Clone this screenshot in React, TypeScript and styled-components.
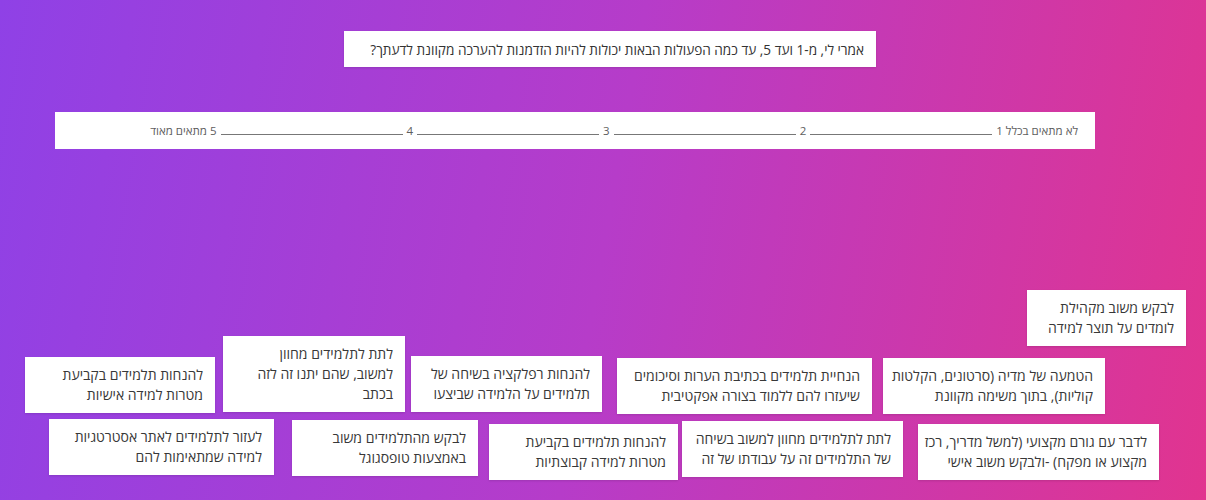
import styled, { createGlobalStyle } from 'styled-components';

const GlobalStyle = createGlobalStyle`
    html, body {
        margin: 0;
        padding: 0;
    }
    body {
        font-family: "Open Sans", "DejaVu Sans", sans-serif;
        direction: rtl;
    }
`;

const Page = styled.div`
    width: 1206px;
    height: 500px;
    display: flex;
    flex-direction: column;
    align-items: center;
    background: linear-gradient(100deg, #8f41e6 0%, #b63cc9 50%, #e1348f 100%);
    overflow: hidden;
`;

const Question = styled.div`
    margin-top: 31px;
    margin-left: 14px;
    width: 532px;
    box-sizing: border-box;
    padding: 0 12px;
    height: 36px;
    display: flex;
    align-items: center;
    background: #fff;
    color: #333;
    font-size: 13.6px;
    box-shadow: 0 1px 2px rgba(0, 0, 0, 0.12);
`;

const Scale = styled.div`
    margin-top: 45px;
    margin-right: 56px;
    width: 1040px;
    height: 37px;
    box-sizing: border-box;
    padding: 0 17px;
    display: flex;
    align-items: baseline;
    gap: 4px;
    background: #fff;
    color: #5e5e5e;
    font-size: 11.5px;
    line-height: 37px;
`;

const ScaleLine = styled.span<{ $w: number }>`
    display: inline-block;
    width: ${(p) => p.$w}px;
    height: 0;
    border-bottom: 1px solid #777;
    margin-bottom: -2px;
`;

const Board = styled.div`
    position: relative;
    flex: 1;
    align-self: stretch;
`;

const Card = styled.div<{ $x: number; $y: number; $w: number }>`
    position: absolute;
    left: ${(p) => p.$x}px;
    top: ${(p) => p.$y}px;
    width: ${(p) => p.$w}px;
    box-sizing: border-box;
    padding: 8px 12px;
    background: #fff;
    color: #383838;
    font-size: 14px;
    line-height: 20px;
    text-align: right;
    white-space: nowrap;
    box-shadow: 0 1px 2px rgba(0, 0, 0, 0.12);
`;

interface Item {
    x: number;
    y: number;
    w: number;
    lines: string[];
}

const TOP = 149;

const items: Item[] = [
    { x: 1027, y: 290, w: 159, lines: ['לבקש משוב מקהילת', 'לומדים על תוצר למידה'] },
    { x: 883, y: 358, w: 222, lines: ['הטמעה של מדיה (סרטונים, הקלטות', 'קוליות), בתוך משימה מקוונת'] },
    { x: 617, y: 358, w: 255, lines: ['הנחיית תלמידים בכתיבת הערות וסיכומים', 'שיעזרו להם ללמוד בצורה אפקטיבית'] },
    { x: 411, y: 356, w: 191, lines: ['להנחות רפלקציה בשיחה של', 'תלמידים על הלמידה שביצעו'] },
    { x: 223, y: 336, w: 182, lines: ['לתת לתלמידים מחוון', 'למשוב, שהם יתנו זה לזה', 'בכתב'] },
    { x: 25, y: 357, w: 190, lines: ['להנחות תלמידים בקביעת', 'מטרות למידה אישיות'] },
    { x: 49, y: 419, w: 225, lines: ['לעזור לתלמידים לאתר אסטרטגיות', 'למידה שמתאימות להם'] },
    { x: 292, y: 420, w: 186, lines: ['לבקש מהתלמידים משוב', 'באמצעות טופסגוגל'] },
    { x: 489, y: 424, w: 189, lines: ['להנחות תלמידים בקביעת', 'מטרות למידה קבוצתיות'] },
    { x: 682, y: 421, w: 221, lines: ['לתת לתלמידים מחוון למשוב בשיחה', 'של התלמידים זה על עבודתו של זה'] },
    { x: 918, y: 424, w: 241, lines: ['לדבר עם גורם מקצועי (למשל מדריך, רכז', 'מקצוע או מפקח) -ולבקש משוב אישי'] },
];

export default function App() {
    return (
        <>
            <GlobalStyle />
            <Page>
                <Question>אמרי לי, מ-1 ועד 5, עד כמה הפעולות הבאות יכולות להיות הזדמנות להערכה מקוונת לדעתך?</Question>
                <Scale>
                    <span>לא מתאים בכלל 1</span>
                    <ScaleLine $w={182} />
                    <span>2</span>
                    <ScaleLine $w={182} />
                    <span>3</span>
                    <ScaleLine $w={182} />
                    <span>4</span>
                    <ScaleLine $w={182} />
                    <span>5 מתאים מאוד</span>
                </Scale>
                <Board>
                    {items.map((item, i) => (
                        <Card key={i} $x={item.x} $y={item.y - TOP} $w={item.w}>
                            {item.lines.map((line, j) => (
                                <div key={j}>{line}</div>
                            ))}
                        </Card>
                    ))}
                </Board>
            </Page>
        </>
    );
}
